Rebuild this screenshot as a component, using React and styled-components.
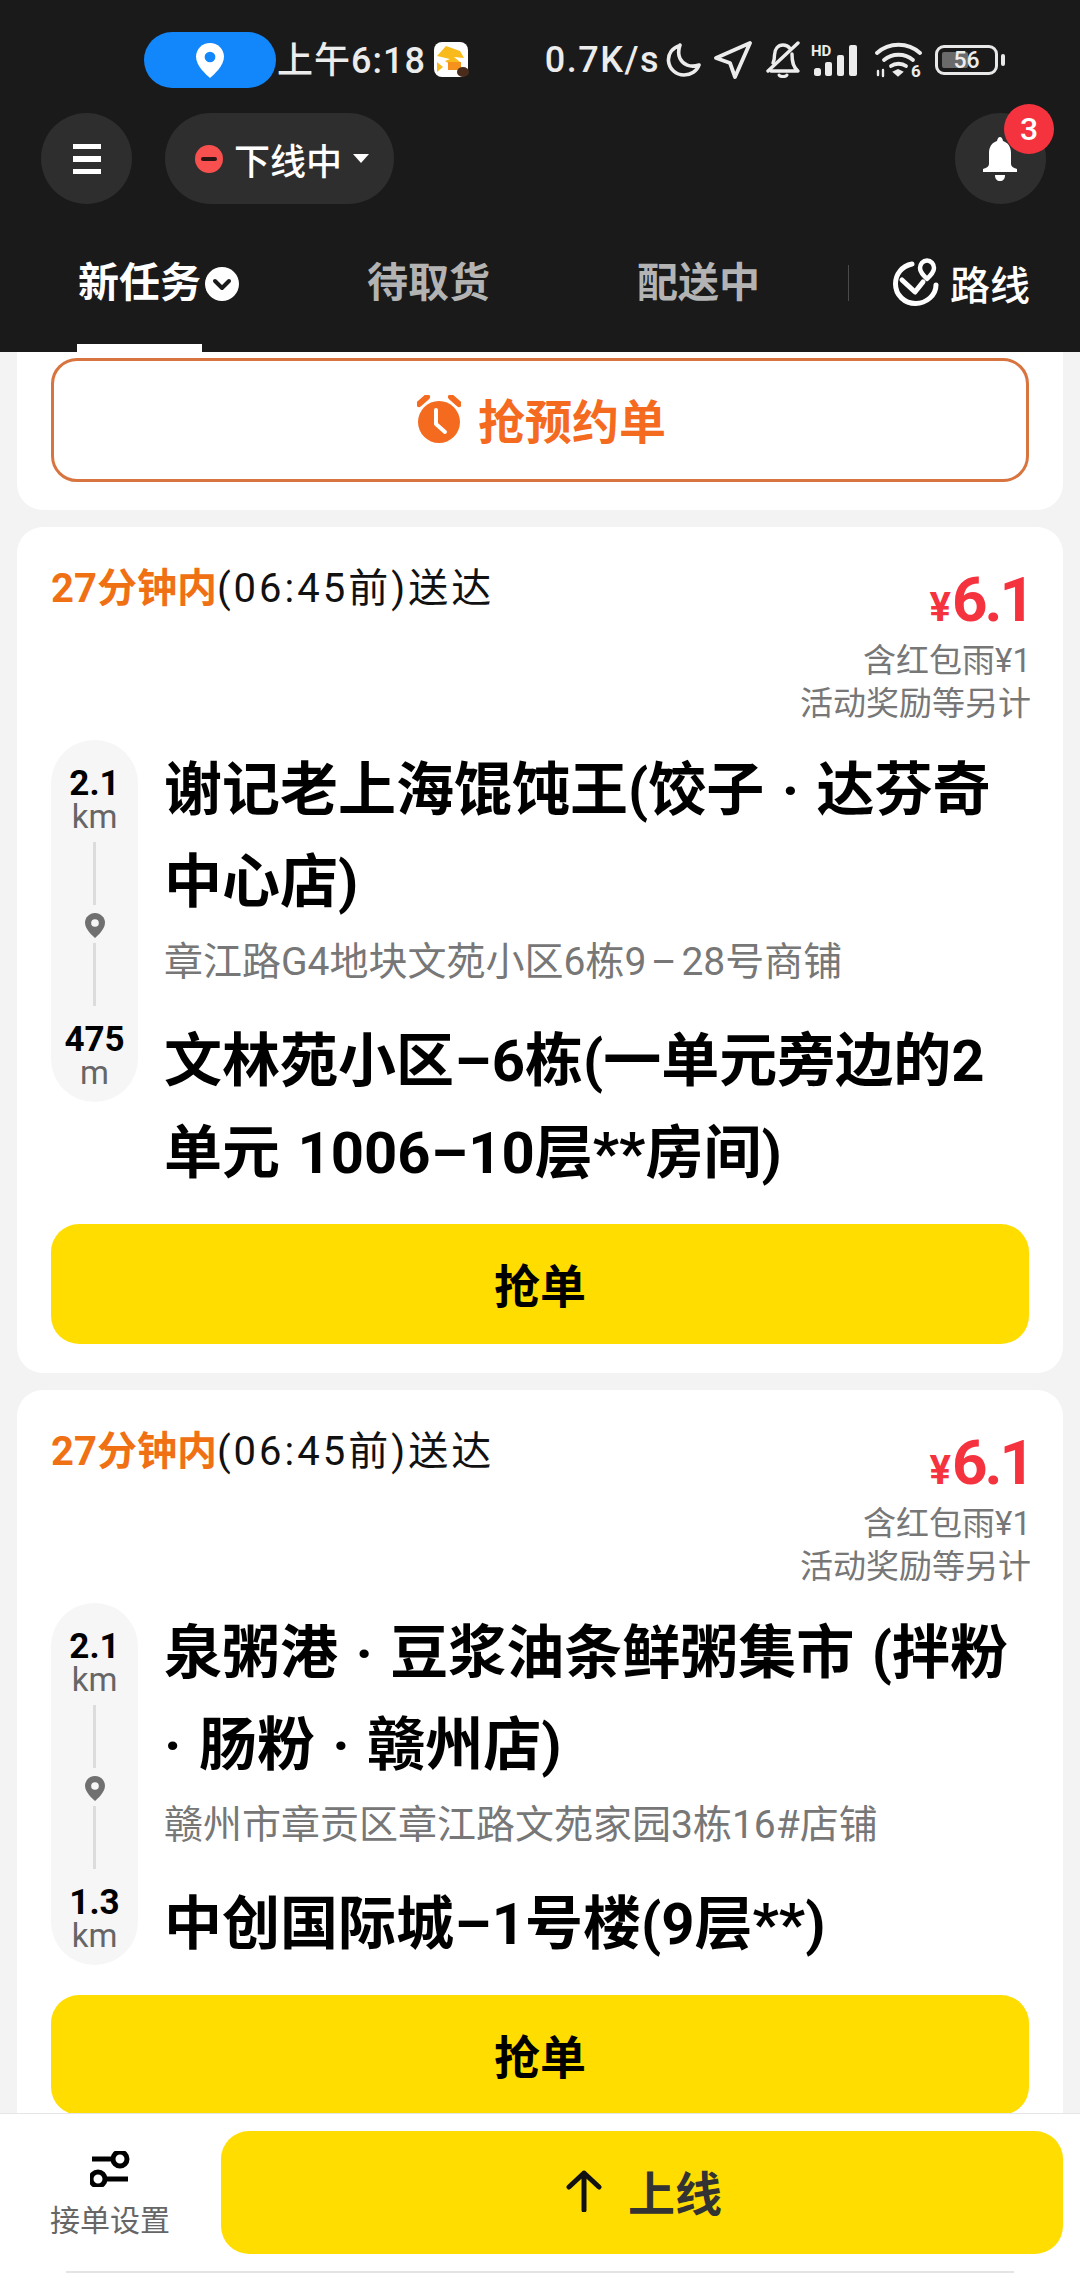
import React from 'react';
import styled, { createGlobalStyle } from 'styled-components';

const GlobalStyle = createGlobalStyle`
  html, body {
    margin: 0;
    padding: 0;
    background: #f3f3f3;
  }
  * {
    box-sizing: border-box;
  }
  body {
    font-family: Roboto, "Noto Sans CJK SC", sans-serif;
  }
`;

const Page = styled.div`
  width: 1080px;
  height: 2288px;
  display: flex;
  flex-direction: column;
  overflow: hidden;
`;

const Header = styled.header`
  flex: none;
  height: 352px;
  background: #1a1a1a;
  color: #fff;
`;

const StatusBar = styled.div`
  height: 113px;
  padding: 32px 82px 0 144px;
  display: flex;
  align-items: flex-start;
`;

const LocationPill = styled.div`
  width: 132px;
  height: 56px;
  border-radius: 28px;
  background: #1287fb;
  display: flex;
  align-items: center;
  justify-content: center;
`;

const Clock = styled.span`
  margin-left: 1px;
  height: 56px;
  line-height: 58px;
  font-size: 36px;
  letter-spacing: 1px;
  font-weight: 500;
  color: #ececec;
  white-space: nowrap;
`;

const AppIcon = styled.svg`
  margin: 10px 0 0 8px;
`;

const StatusRight = styled.div`
  margin-left: auto;
  height: 56px;
  display: flex;
  align-items: center;
  color: #ececec;
`;

const Speed = styled.span`
  font-size: 36px;
  line-height: 56px;
  letter-spacing: 1.5px;
  font-weight: 500;
  margin-right: 6px;
  white-space: nowrap;
`;

const StatusIcon = styled.svg`
  flex: none;
  margin-right: ${(p) => p.$gap || 0}px;
`;

const Battery = styled.div`
  position: relative;
  width: 63px;
  height: 30px;
  border: 3px solid #e8e8e8;
  border-radius: 9px;
  margin-left: 13px;
  display: flex;
  align-items: center;
  justify-content: center;
  font-size: 23px;
  font-weight: 500;
  color: #ececec;
  &::before {
    content: '';
    position: absolute;
    left: 4px;
    top: 4px;
    bottom: 4px;
    width: 26px;
    background: #6a6a6a;
    border-radius: 2px;
  }
  &::after {
    content: '';
    position: absolute;
    right: -10px;
    top: 6px;
    width: 4px;
    height: 12px;
    border-radius: 2px;
    background: #e8e8e8;
  }
  span {
    position: relative;
  }
`;

const Toolbar = styled.div`
  height: 91px;
  padding: 0 34px 0 41px;
  display: flex;
  align-items: center;
`;

const RoundButton = styled.div`
  position: relative;
  width: 91px;
  height: 91px;
  border-radius: 50%;
  background: #2e2e2e;
  display: flex;
  align-items: center;
  justify-content: center;
  margin-left: ${(p) => (p.$end ? 'auto' : '0')};
`;

const Badge = styled.span`
  position: absolute;
  top: -9px;
  right: -8px;
  width: 50px;
  height: 50px;
  border-radius: 50%;
  background: #f5333f;
  color: #fff;
  font-size: 32px;
  font-weight: 500;
  display: flex;
  align-items: center;
  justify-content: center;
`;

const StatePill = styled.div`
  width: 229px;
  height: 91px;
  margin-left: 33px;
  padding-left: 29px;
  border-radius: 46px;
  background: #2e2e2e;
  display: flex;
  align-items: center;
`;

const StateLabel = styled.span`
  margin: 0 11px 0 10px;
  font-size: 36px;
  font-weight: 500;
  color: #fff;
`;

const Tabs = styled.div`
  height: 148px;
  padding-left: 77px;
  display: grid;
  grid-template-columns: 289px 270px 212px 1fr;
`;

const Tab = styled.div`
  display: flex;
  align-items: flex-start;
`;

const TabLabel = styled.span`
  height: 148px;
  padding: 58px 1px 0;
  line-height: 42px;
  font-size: 41px;
  font-weight: 700;
  color: ${(p) => (p.$active ? '#fff' : '#b3b3b3')};
  border-bottom: 8px solid ${(p) => (p.$active ? '#fff' : 'transparent')};
`;

const TabCheck = styled.svg`
  margin: 63px 0 0 3px;
`;

const RouteTab = styled.div`
  height: 36px;
  margin-top: 61px;
  padding-left: 44px;
  border-left: 1px solid #4a4a4a;
  display: flex;
  align-items: center;
  font-size: 40px;
  font-weight: 500;
  color: #fff;
  svg {
    margin-right: 11px;
    flex: none;
  }
`;

const List = styled.div`
  flex: 1;
  min-height: 0;
  overflow: hidden;
  display: flex;
  flex-direction: column;
  gap: 17px;
  padding: 0 17px;
`;

const Card = styled.section`
  flex: none;
  background: #fff;
  border-radius: ${(p) => (p.$top ? '0 0 26px 26px' : '26px')};
  padding: ${(p) => (p.$top ? '6px 34px 28px' : '26px 34px 29px')};
`;

const ReserveButton = styled.div`
  height: 124px;
  padding: 0 0 3px 3px;
  border: 3px solid #d8743f;
  border-radius: 26px;
  display: flex;
  align-items: center;
  justify-content: center;
  gap: 17px;
  font-size: 47px;
  font-weight: 700;
  color: #f46a1f;
`;

const CardHead = styled.div`
  display: flex;
  justify-content: space-between;
  align-items: flex-start;
  height: 187px;
`;

const Deadline = styled.div`
  margin-top: 11px;
  font-size: 40px;
  line-height: 50px;
  letter-spacing: 3px;
  color: #111;
  white-space: nowrap;
  b {
    font-weight: 700;
    letter-spacing: 0;
    color: #f07014;
  }
`;

const PriceBlock = styled.div`
  margin-right: -2px;
  text-align: right;
`;

const Price = styled.div`
  height: 86px;
  margin-right: -1px;
  line-height: 94px;
  font-size: 62px;
  letter-spacing: -3px;
  font-weight: 700;
  color: #f5333f;
  small {
    font-size: 40px;
    letter-spacing: 0;
    margin-right: 1px;
  }
`;

const PriceNote = styled.div`
  font-size: 33px;
  line-height: 43px;
  color: #777;
`;

const CardBody = styled.div`
  display: grid;
  grid-template-columns: 87px 1fr;
  column-gap: 26px;
  align-items: start;
`;

const DistanceRail = styled.div`
  height: 362px;
  padding: 26px 0 14px;
  border-radius: 44px;
  background: #f6f6f6;
  display: flex;
  flex-direction: column;
  align-items: center;
`;

const DistanceValue = styled.div`
  font-size: 35px;
  line-height: 36px;
  font-weight: 700;
  color: #000;
`;

const DistanceUnit = styled.div`
  font-size: 33px;
  line-height: 30px;
  color: #666;
`;

const RailLine = styled.div`
  flex: 1;
  width: 3px;
  background: #dcdcdc;
  margin: ${(p) => p.$margin};
`;

const Stops = styled.div`
  padding-top: 4px;
`;

const Dash = styled.span`
  display: inline-block;
  width: 0.65em;
  text-align: center;
`;

const PlaceName = styled.div`
  font-size: 58px;
  line-height: 92px;
  word-spacing: 3px;
  font-weight: 700;
  color: #000;
`;

const PlaceAddress = styled.div`
  margin: 7px 0 26px;
  font-size: 39px;
  line-height: 54px;
  color: #777;
  white-space: nowrap;
  ${Dash} {
    width: 0.9em;
  }
`;

const GrabButton = styled.div`
  height: 120px;
  margin-top: 25px;
  padding-bottom: 2px;
  border-radius: 28px;
  background: #ffdd00;
  display: flex;
  align-items: center;
  justify-content: center;
  font-size: 46px;
  font-weight: 700;
  color: #000;
`;

const Footer = styled.footer`
  flex: none;
  height: 175px;
  padding-top: 17px;
  background: #fff;
  border-top: 1px solid #e6e6e6;
`;

const FooterRow = styled.div`
  height: 123px;
  padding: 0 17px 0 51px;
  display: flex;
`;

const SettingsItem = styled.div`
  width: 118px;
  display: flex;
  flex-direction: column;
  align-items: center;
  padding-top: 20px;
  font-size: 30px;
  line-height: 40px;
  color: #666;
  white-space: nowrap;
  svg {
    margin-bottom: 14px;
  }
`;

const OnlineButton = styled.div`
  flex: 1;
  margin-left: 52px;
  padding: 0 0 4px 4px;
  border-radius: 28px;
  background: #ffdd00;
  display: flex;
  align-items: center;
  justify-content: center;
  gap: 26px;
  font-size: 47px;
  font-weight: 700;
  color: #333;
`;

const GestureLine = styled.div`
  height: 2px;
  margin: 17px 66px 0;
  background: #e4e4e4;
`;

function PinIcon({ size = 30, color = '#fff', hole = '#1287fb' }) {
  return (
    <svg width={size} height={size * 1.25} viewBox="0 0 24 30">
      <path d="M12 0C5.4 0 0 5.3 0 11.8 0 19.5 9 27.5 12 30c3-2.5 12-10.5 12-18.2C24 5.3 18.6 0 12 0z" fill={color} />
      <circle cx="12" cy="12" r="4.6" fill={hole} />
    </svg>
  );
}

// the app draws its hyphens much wider than the font does
function dashed(text) {
  return text.split('-').map((part, i) => (
    <React.Fragment key={i}>
      {i > 0 && <Dash>–</Dash>}
      {part}
    </React.Fragment>
  ));
}

function OrderCard({ order }) {
  return (
    <Card>
      <CardHead>
        <Deadline>
          <b>27分钟内</b>(06:45前)送达
        </Deadline>
        <PriceBlock>
          <Price>
            <small>¥</small>6.1
          </Price>
          <PriceNote>含红包雨¥1</PriceNote>
          <PriceNote>活动奖励等另计</PriceNote>
        </PriceBlock>
      </CardHead>
      <CardBody>
        <DistanceRail>
          <DistanceValue>{order.fromValue}</DistanceValue>
          <DistanceUnit>{order.fromUnit}</DistanceUnit>
          <RailLine $margin="10px 0 8px" />
          <PinIcon size={20} color="#707070" hole="#f6f6f6" />
          <RailLine $margin="5px 0 16px" />
          <DistanceValue>{order.toValue}</DistanceValue>
          <DistanceUnit>{order.toUnit}</DistanceUnit>
        </DistanceRail>
        <Stops>
          <PlaceName>{order.shop}</PlaceName>
          <PlaceAddress>{dashed(order.address)}</PlaceAddress>
          <PlaceName>{dashed(order.dest)}</PlaceName>
        </Stops>
      </CardBody>
      <GrabButton>抢单</GrabButton>
    </Card>
  );
}

const orders = [
  {
    fromValue: '2.1',
    fromUnit: 'km',
    toValue: '475',
    toUnit: 'm',
    shop: '谢记老上海馄饨王(饺子 · 达芬奇中心店)',
    address: '章江路G4地块文苑小区6栋9-28号商铺',
    dest: '文林苑小区-6栋(一单元旁边的2单元 1006-10层**房间)',
  },
  {
    fromValue: '2.1',
    fromUnit: 'km',
    toValue: '1.3',
    toUnit: 'km',
    shop: '泉粥港 · 豆浆油条鲜粥集市 (拌粉 · 肠粉 · 赣州店)',
    address: '赣州市章贡区章江路文苑家园3栋16#店铺',
    dest: '中创国际城-1号楼(9层**)',
  },
];

export default function App() {
  return (
    <Page>
      <GlobalStyle />
      <Header>
        <StatusBar>
          <LocationPill>
            <PinIcon size={28} />
          </LocationPill>
          <Clock>上午6:18</Clock>
          <AppIcon width="35" height="36" viewBox="0 0 35 36">
            <rect width="34" height="35" rx="8" fill="#fff" />
            <path d="M3 14 12 4l14 5 4 7-10-1 6 5-9 3-6-4 5-2z" fill="#f9bb1c" />
            <rect x="14" y="20" width="13" height="8" fill="#f5921e" />
            <path d="M3 20l6 5-6 5z" fill="#f9bb1c" />
            <ellipse cx="29" cy="30" rx="6" ry="5" fill="#4a2c1c" />
          </AppIcon>
          <StatusRight>
            <Speed>0.7K/s</Speed>
            <StatusIcon width="36" height="34" viewBox="0 0 36 34" $gap={12} fill="none" stroke="#ececec" strokeWidth="3.6" strokeLinecap="round" strokeLinejoin="round">
              <path d="M14 2.5C6 5 2 11 2.5 18c.7 8 7.5 14 15.5 14 7 0 13-4 15-10-9 3-16-.5-19-6.500-2-4-1.500-9 0-13.500z" />
            </StatusIcon>
            <StatusIcon width="38" height="38" viewBox="0 0 38 38" $gap={13} fill="none" stroke="#ececec" strokeWidth="3.8" strokeLinejoin="round">
              <path d="M36 2 2 17l14 5 5 14z" />
            </StatusIcon>
            <StatusIcon width="36" height="38" viewBox="0 0 36 38" $gap={10} fill="none" stroke="#ececec" strokeWidth="3.4" strokeLinecap="round" strokeLinejoin="round">
              <path d="M33 2 3 30" />
              <path d="M8 22c1-2 1.500-4 1.500-8C9.500 8 13 4 18 4c3 0 5.500 1.500 7 3.500M27 13c0 8 1 13 6 17H6" />
              <path d="M14 34c1 2 7 2 8 0" strokeWidth="3" />
            </StatusIcon>
            <StatusIcon width="53" height="32" viewBox="0 0 53 32" $gap={11}>
              <text x="0" y="12" fontSize="15" fontWeight="700" fontFamily="Roboto, sans-serif" fill="#ececec">HD</text>
              <rect x="3" y="24" width="7" height="8" rx="2.500" fill="#ececec" />
              <rect x="14" y="18" width="7" height="14" rx="2" fill="#ececec" />
              <rect x="26" y="11" width="7" height="21" rx="2" fill="#ececec" />
              <rect x="38" y="1" width="8" height="31" rx="2" fill="#ececec" />
            </StatusIcon>
            <StatusIcon width="47" height="36" viewBox="0 0 47 36" fill="none" stroke="#ececec" strokeWidth="3.8" strokeLinecap="round">
              <path d="M2 11c12-11 31-11 43 0" />
              <path d="M9 18c8-7 21-7 29 0" />
              <path d="M16 24c4-3 11-3 15 0" />
              <path d="M19 30l4 3.500 4-3.500-4-2z" fill="#ececec" strokeWidth="2" />
              <text x="36" y="35" fontSize="17" fontWeight="700" fontFamily="Roboto, sans-serif" fill="#ececec" stroke="none">6</text>
              <path d="M3 33v-4M8 28v6" strokeWidth="2.400" />
            </StatusIcon>
            <Battery>
              <span>56</span>
            </Battery>
          </StatusRight>
        </StatusBar>
        <Toolbar>
          <RoundButton>
            <svg width="28" height="30" viewBox="0 0 28 30" fill="#fff">
              <rect y="0" width="28" height="5" />
              <rect y="12" width="28" height="6" />
              <rect y="25" width="28" height="5" />
            </svg>
          </RoundButton>
          <StatePill>
            <svg width="30" height="30" viewBox="0 0 30 30">
              <circle cx="15" cy="15" r="14" fill="#f8504f" />
              <rect x="7" y="13" width="16" height="4" rx="2" fill="#2b1414" />
            </svg>
            <StateLabel>下线中</StateLabel>
            <svg width="16" height="9" viewBox="0 0 16 9">
              <path d="M0 0h16L8 9z" fill="#fff" />
            </svg>
          </StatePill>
          <RoundButton $end>
            <svg width="36" height="44" viewBox="0 0 36 44" fill="#fff" style={{ marginRight: 2 }}>
              <path d="M18 0c1.500 0 2.500 1.500 3 4 5 1.500 8 6 8 12v11c0 2 2 4 6 5v3H1v-3c4-1 6-3 6-5V16c0-6 3-10.500 8-12 .5-2.500 1.500-4 3-4z" />
              <path d="M13 38h10c0 4-2 6-5 6s-5-2-5-6z" />
            </svg>
            <Badge>3</Badge>
          </RoundButton>
        </Toolbar>
        <Tabs>
          <Tab>
            <TabLabel $active>新任务</TabLabel>
            <TabCheck width="34" height="34" viewBox="0 0 34 34">
              <circle cx="17" cy="17" r="17" fill="#fff" />
              <path d="M10 14l7 7 7-7" fill="none" stroke="#1a1a1a" strokeWidth="4" strokeLinecap="round" strokeLinejoin="round" />
            </TabCheck>
          </Tab>
          <Tab>
            <TabLabel>待取货</TabLabel>
          </Tab>
          <Tab>
            <TabLabel>配送中</TabLabel>
          </Tab>
          <RouteTab>
            <svg width="46" height="48" viewBox="0 0 46 48" fill="none" stroke="#fff" strokeWidth="5" strokeLinecap="round" strokeLinejoin="round" style={{ marginTop: -2 }}>
              <path d="M19 6C9 8 2.500 16 2.500 26c0 11 9 19.500 20 19.500S43 37 43 27" />
              <path d="M9 22l13 12 8-10" />
              <path d="M34 21c-4-4-7-7-7-11 0-4 3-7.500 7-7.500s7 3.500 7 7.500c0 4-3 7-7 11z" strokeWidth="4.500" />
            </svg>
            路线
          </RouteTab>
        </Tabs>
      </Header>
      <List>
        <Card $top>
          <ReserveButton>
            <svg width="44" height="48" viewBox="0 0 44 48">
              <circle cx="22" cy="27" r="21" fill="#f46a1f" />
              <path d="M2 9l8-7M42 9l-8-7" stroke="#f46a1f" strokeWidth="6" strokeLinecap="round" />
              <path d="M19 15v14l9 8" fill="none" stroke="#fff" strokeWidth="4" strokeLinecap="round" strokeLinejoin="round" />
            </svg>
            抢预约单
          </ReserveButton>
        </Card>
        {orders.map((order) => (
          <OrderCard key={order.shop} order={order} />
        ))}
      </List>
      <Footer>
        <FooterRow>
          <SettingsItem>
            <svg width="40" height="36" viewBox="0 0 40 36" fill="none" stroke="#000" strokeWidth="5">
              <circle cx="30" cy="8" r="7" />
              <path d="M2 8h21" />
              <circle cx="8" cy="28" r="7" />
              <path d="M15 28h23" />
            </svg>
            接单设置
          </SettingsItem>
          <OnlineButton>
            <svg width="36" height="42" viewBox="0 0 36 42" fill="none" stroke="#111" strokeWidth="5" strokeLinecap="round" strokeLinejoin="round">
              <path d="M18 40V3M3 17 18 3l15 14" />
            </svg>
            上线
          </OnlineButton>
        </FooterRow>
        <GestureLine />
      </Footer>
    </Page>
  );
}
